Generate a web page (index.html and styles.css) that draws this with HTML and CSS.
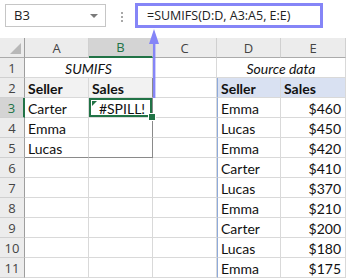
FILE: index.html
```html
<!DOCTYPE html>
<html lang="en">
<head>
  <meta charset="UTF-8" />
  <title>SUMIFS spill</title>
  <link rel="stylesheet" href="styles.css">
</head>
<body>
  <div class="screen">
    <div class="toolbar">
      <div class="name-box">B3<span class="drop"></span></div>
      <div class="dots"><i></i><i></i><i></i></div>
      <div class="formula">=SUMIFS(D:D, A3:A5, E:E)</div>
    </div>

    <div class="sheet">
      <div class="hd corner"><span class="tri"></span></div>
      <div class="hd col">A</div>
      <div class="hd col active">B</div>
      <div class="hd col">C</div>
      <div class="hd col">D</div>
      <div class="hd col">E</div>

      <div class="hd row">1</div>
      <div class="c title span2">SUMIFS</div>
      <div class="c"></div>
      <div class="c title span2">Source data</div>

      <div class="hd row">2</div>
      <div class="c th">Seller</div>
      <div class="c th right-edge">Sales</div>
      <div class="c"></div>
      <div class="c th blue src-left">Seller</div>
      <div class="c th blue">Sales</div>

      <div class="hd row active">3</div>
      <div class="c">Carter</div>
      <div class="c right-edge selected">#SPILL!</div>
      <div class="c"></div>
      <div class="c src-left">Emma</div>
      <div class="c num">$460</div>

      <div class="hd row">4</div>
      <div class="c">Emma</div>
      <div class="c right-edge"></div>
      <div class="c"></div>
      <div class="c src-left">Lucas</div>
      <div class="c num">$450</div>

      <div class="hd row">5</div>
      <div class="c bottom-edge">Lucas</div>
      <div class="c right-edge bottom-edge"></div>
      <div class="c"></div>
      <div class="c src-left">Emma</div>
      <div class="c num">$420</div>

      <div class="hd row">6</div>
      <div class="c"></div>
      <div class="c"></div>
      <div class="c"></div>
      <div class="c src-left">Carter</div>
      <div class="c num">$410</div>

      <div class="hd row">7</div>
      <div class="c"></div>
      <div class="c"></div>
      <div class="c"></div>
      <div class="c src-left">Lucas</div>
      <div class="c num">$370</div>

      <div class="hd row">8</div>
      <div class="c"></div>
      <div class="c"></div>
      <div class="c"></div>
      <div class="c src-left">Emma</div>
      <div class="c num">$210</div>

      <div class="hd row">9</div>
      <div class="c"></div>
      <div class="c"></div>
      <div class="c"></div>
      <div class="c src-left">Carter</div>
      <div class="c num">$200</div>

      <div class="hd row">10</div>
      <div class="c"></div>
      <div class="c"></div>
      <div class="c"></div>
      <div class="c src-left">Lucas</div>
      <div class="c num">$180</div>

      <div class="hd row">11</div>
      <div class="c"></div>
      <div class="c"></div>
      <div class="c"></div>
      <div class="c src-left">Emma</div>
      <div class="c num">$175</div>
    </div>

    <svg class="pointer" width="14" height="72" viewBox="0 0 14 72">
      <path d="M7 1 L12 16 L2 16 Z" fill="#8585f7"/>
      <rect x="6" y="14" width="2.4" height="56" fill="#8585f7"/>
    </svg>
  </div>
</body>
</html>
```

FILE: styles.css
```css
body {
  margin: 0;
  background: #fff;
}
.screen {
  position: relative;
  width: 346px;
  height: 279px;
  overflow: hidden;
  background: #fff;
}

/* formula bar */
.toolbar {
  height: 38px;
  display: flex;
  align-items: flex-start;
  font-family: "Open Sans", sans-serif;
  color: #222;
}
.name-box {
  position: relative;
  margin: 4px 0 0 5px;
  width: 101px;
  height: 23px;
  box-sizing: border-box;
  border: 1px solid #c6c6c6;
  padding-left: 8px;
  font-size: 13px;
  line-height: 21px;
}
.drop {
  position: absolute;
  right: 7px;
  top: 9px;
  border-left: 4px solid transparent;
  border-right: 4px solid transparent;
  border-top: 4px solid #7a7a7a;
}
.dots {
  margin: 12px 0 0 15px;
  display: flex;
  flex-direction: column;
  gap: 2px;
}
.dots i {
  width: 2px;
  height: 2px;
  background: #a8a8a8;
}
.formula {
  margin: 3px 0 0 12px;
  width: 188px;
  height: 25px;
  box-sizing: border-box;
  border: 3px solid #8585f7;
  padding-left: 9px;
  font-size: 12.5px;
  line-height: 19px;
  white-space: nowrap;
}

/* grid */
.sheet {
  display: grid;
  grid-template-columns: 25px 64px 64px 64px 64px 65px;
  grid-template-rows: repeat(12, 20px);
  font-family: "Lato", sans-serif;
  font-size: 14px;
  color: #111;
}
.hd {
  background: #ececec;
  box-sizing: border-box;
  font-family: "Open Sans", sans-serif;
  font-size: 13px;
  color: #444;
  display: flex;
  align-items: center;
  justify-content: center;
}
.col {
  border-right: 1px solid #d0d0d0;
  border-bottom: 1px solid #ababab;
}
.row {
  border-right: 1px solid #9e9e9e;
  border-bottom: 1px solid #d0d0d0;
}
.corner {
  position: relative;
  border-right: 1px solid #9e9e9e;
  border-bottom: 1px solid #ababab;
}
.tri {
  position: absolute;
  right: 3px;
  bottom: 3px;
  border-left: 11px solid transparent;
  border-bottom: 11px solid #b8b8b8;
}
.col.active {
  background: #d4d4d4;
  color: #217346;
  border-bottom: 2px solid #217346;
}
.row.active {
  background: #d4d4d4;
  color: #217346;
  border-right: 2px solid #217346;
}

.c {
  box-sizing: border-box;
  border-right: 1px solid #d9d9d9;
  border-bottom: 1px solid #d9d9d9;
  padding: 1px 3px 0 3px;
  line-height: 19px;
  white-space: nowrap;
}
.span2 {
  grid-column: span 2;
}
.title {
  font-style: italic;
  text-align: center;
}
.th {
  font-weight: bold;
  background: #f2f2f2;
}
.th.blue {
  background: #d9e1f2;
}
.num {
  text-align: right;
  padding-right: 4px;
}
.src-left {
  border-left: 1px solid #8eaadb;
  padding-left: 3px;
}
.right-edge {
  border-right: 1px solid #8a8a8a;
}
.bottom-edge {
  border-bottom: 1px solid #8a8a8a;
}
.selected {
  position: relative;
  text-align: center;
  padding-left: 6px;
  box-shadow: inset 0 0 0 2px #217346;
}
.selected::before {
  content: "";
  position: absolute;
  left: 3px;
  top: 3px;
  border-top: 5px solid #217346;
  border-right: 5px solid transparent;
}
.selected::after {
  content: "";
  position: absolute;
  right: -4px;
  bottom: -4px;
  width: 6px;
  height: 6px;
  background: #217346;
  border: 1px solid #fff;
}

/* arrow from formula to cell */
.pointer {
  position: absolute;
  left: 147px;
  top: 28px;
}
```
